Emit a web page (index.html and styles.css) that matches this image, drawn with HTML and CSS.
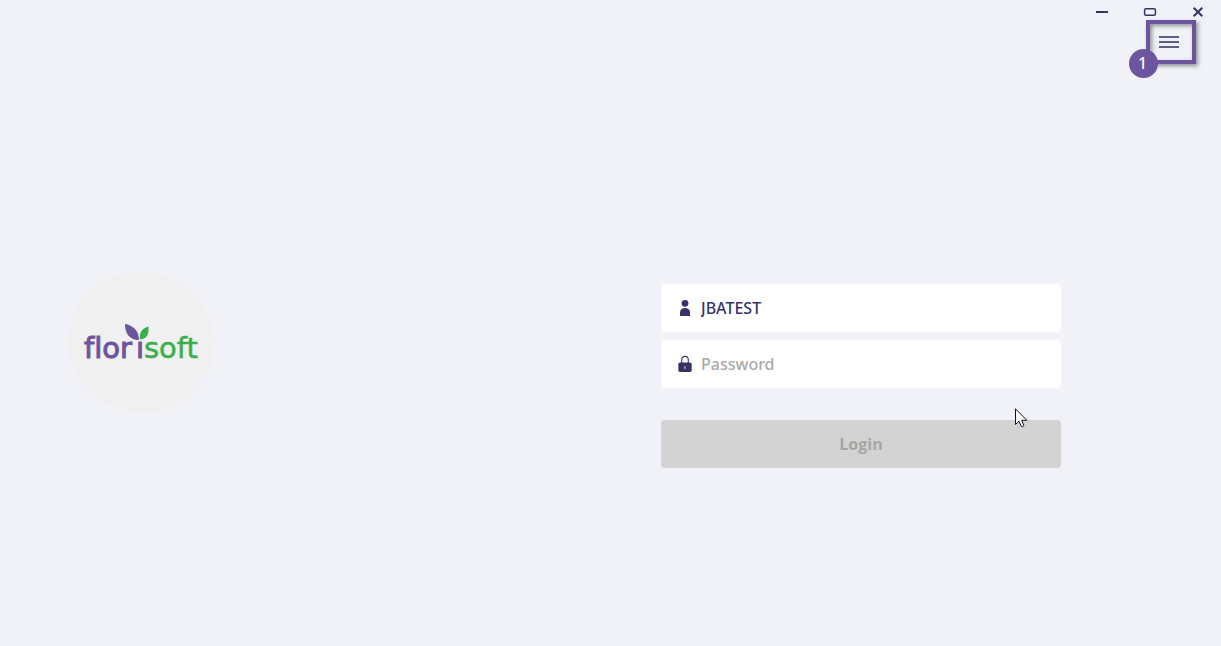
FILE: index.html
```html
<!DOCTYPE html>
<html lang="en">
<head>
<meta charset="utf-8">
<title>Florisoft</title>
<link rel="stylesheet" href="styles.css">
</head>
<body>
<div class="window">
  <header class="titlebar">
    <button class="window-button" type="button" aria-label="Minimize">
      <svg width="16" height="16" viewBox="0 0 16 16"><path d="M3 8h12" stroke="currentColor" stroke-width="2"/></svg>
    </button>
    <button class="window-button" type="button" aria-label="Maximize">
      <svg width="16" height="16" viewBox="0 0 16 16"><rect x="3.600" y="4.700" width="10.800" height="6.600" rx="1.400" fill="none" stroke="currentColor" stroke-width="1.500"/></svg>
    </button>
    <button class="window-button" type="button" aria-label="Close">
      <svg width="16" height="16" viewBox="0 0 16 16"><path d="M4.700 3.700l8.600 8.600M13.300 3.700l-8.600 8.600" fill="none" stroke="currentColor" stroke-width="2"/></svg>
    </button>
  </header>
  <main class="content">
    <section class="brand">
      <div class="brand-circle">
        <svg class="logo" width="146" height="140" viewBox="0 0 146 140" role="img" aria-label="florisoft">
          <text class="logo-text logo-purple" x="16" y="86">flor<tspan x="68">ı</tspan></text>
          <text class="logo-text logo-green" x="76" y="86">soft</text>
          <path class="leaf-purple" d="M57 52C65 53 71 59 71 68C61 68 57 61 57 52Z"/>
          <path class="leaf-green" d="M80.500 54.500C81 62 79 67 72 67.500C71 61 74 56 80.500 54.500Z"/>
        </svg>
      </div>
    </section>
    <form class="login">
      <label class="field">
        <svg width="16" height="18" viewBox="0 0 16 18" aria-hidden="true"><circle cx="8" cy="4.300" r="3.400" fill="currentColor"/><path d="M3 16.900v-3.400C3 10.500 5 9 8 9s5 1.500 5 4.500v3.400z" fill="currentColor"/></svg>
        <input type="text" value="JBATEST" aria-label="User name">
      </label>
      <label class="field">
        <svg width="16" height="18" viewBox="0 0 16 18" aria-hidden="true"><path d="M4.700 9V4.700a3.300 3.300 0 0 1 6.600 0V9" fill="none" stroke="currentColor" stroke-width="1.100"/><rect x="1.300" y="7.500" width="13.400" height="9.500" rx="1.800" fill="currentColor"/><path d="M8 11v3" stroke="#b9b8ce" stroke-width="1.200"/></svg>
        <input type="password" placeholder="Password" aria-label="Password">
      </label>
      <button class="login-button" type="submit" disabled>Login</button>
    </form>
  </main>
  <div class="callout">
    <button class="menu-button" type="button" aria-label="Menu">
      <svg width="20" height="12" viewBox="0 0 20 12"><path d="M0 1h20M0 6h20M0 11h20" stroke="currentColor" stroke-width="2"/></svg>
    </button>
    <span class="badge">1</span>
  </div>
  <svg class="cursor" width="13" height="20" viewBox="0 0 13 20" aria-hidden="true"><path d="M.5.8V16.500L4 13.200L6.400 18.400Q7.600 19.200 8.900 17.700L6.700 12.300H11.800Z" fill="#fff" stroke="#111125" stroke-width="1"/></svg>
</div>
</body>
</html>
```
FILE: styles.css
```css
* {
  box-sizing: border-box;
}

body {
  margin: 0;
  background: #f0f2f8;
  color: #373366;
  font-family: "Open Sans", "Noto Sans", sans-serif;
  font-size: 16px;
}

button,
input {
  border: 0;
  padding: 0;
  background: none;
  color: inherit;
  font: inherit;
}

svg {
  display: block;
  flex: none;
}

.window {
  position: relative;
  display: flex;
  flex-direction: column;
  min-height: 100vh;
}

.titlebar {
  display: flex;
  justify-content: flex-end;
}

.window-button {
  display: flex;
  align-items: center;
  justify-content: center;
  width: 48px;
  height: 24px;
}

.content {
  flex: 1;
  display: flex;
  align-items: center;
  justify-content: space-between;
  padding: 0 160px 0 68px;
}

.brand {
  padding-top: 14px;
}

.brand-circle {
  border-radius: 50%;
  background: #f0f0f0;
}

.logo-text {
  font-family: "DejaVu Sans", sans-serif;
  font-size: 29px;
  font-variant-ligatures: none;
}

.logo-purple {
  fill: #6d549f;
  stroke: #6d549f;
  stroke-width: 1px;
}

.logo-green {
  fill: #3aae4b;
  stroke: #3aae4b;
  stroke-width: 0.5px;
}

.leaf-purple {
  fill: #6d549f;
}

.leaf-green {
  fill: #3aae4b;
}

.login {
  display: flex;
  flex-direction: column;
  gap: 8px;
  width: 400px;
  padding-top: 82px;
}

.field {
  display: flex;
  align-items: center;
  gap: 8px;
  height: 48px;
  padding: 0 16px;
  border-radius: 4px;
  background: #fff;
}

.field input {
  flex: 1;
  min-width: 0;
  height: 24px;
  outline: 0;
  font-family: "Noto Sans", sans-serif;
  font-weight: 500;
}

.field input::placeholder {
  color: #a9a9a9;
  opacity: 1;
}

.login-button {
  height: 48px;
  margin-top: 24px;
  border-radius: 4px;
  background: #d3d3d3;
  color: #a6a6a6;
  font-weight: 700;
}

.callout {
  position: absolute;
  top: 20px;
  right: 25px;
  width: 50px;
  height: 44px;
  border: 4px solid #6d549f;
  box-shadow: 2px 2px 4px #0006, inset 2px 2px 4px #0006;
}

.menu-button {
  display: flex;
  align-items: center;
  width: 100%;
  height: 100%;
  padding-left: 9px;
  color: #5f5c88;
}

.badge {
  position: absolute;
  left: -21px;
  bottom: -18px;
  display: flex;
  align-items: center;
  justify-content: center;
  width: 29px;
  height: 29px;
  padding: 0 2px 2px 0;
  border-radius: 50%;
  background: #6d549f;
  color: #fff;
  font-family: "Noto Sans", sans-serif;
  font-weight: 500;
}

.cursor {
  position: absolute;
  top: 408px;
  right: 193px;
}
```
